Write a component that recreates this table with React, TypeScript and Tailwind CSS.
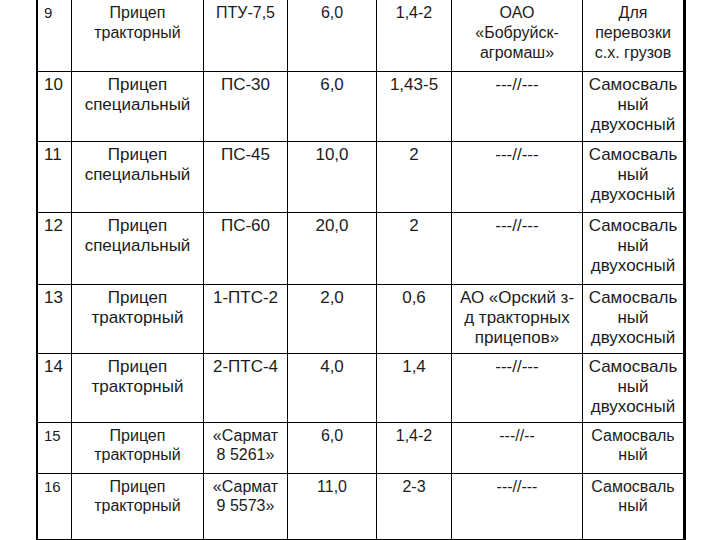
const rows = [
  {
    h: 'h-[72px]',
    size: 'text-[16px] leading-[20px]',
    numSize: 'text-[15px]',
    cells: ['9', ['Прицеп', 'тракторный'], ['ПТУ-7,5'], ['6,0'], ['1,4-2'], ['ОАО', '«Бобруйск-', 'агромаш»'], ['Для', 'перевозки', 'с.х. грузов']],
  },
  {
    h: 'h-[70px]',
    size: 'text-[17px] leading-[20px]',
    numSize: 'text-[17px]',
    cells: ['10', ['Прицеп', 'специальный'], ['ПС-30'], ['6,0'], ['1,43-5'], ['---//---'], ['Самосваль', 'ный', 'двухосный']],
  },
  {
    h: 'h-[71px]',
    size: 'text-[17px] leading-[20px]',
    numSize: 'text-[17px]',
    cells: ['11', ['Прицеп', 'специальный'], ['ПС-45'], ['10,0'], ['2'], ['---//---'], ['Самосваль', 'ный', 'двухосный']],
  },
  {
    h: 'h-[72px]',
    size: 'text-[17px] leading-[20px]',
    numSize: 'text-[17px]',
    cells: ['12', ['Прицеп', 'специальный'], ['ПС-60'], ['20,0'], ['2'], ['---//---'], ['Самосваль', 'ный', 'двухосный']],
  },
  {
    h: 'h-[69px]',
    size: 'text-[17px] leading-[20px]',
    numSize: 'text-[17px]',
    cells: ['13', ['Прицеп', 'тракторный'], ['1-ПТС-2'], ['2,0'], ['0,6'], ['АО «Орский з-', 'д тракторных', 'прицепов»'], ['Самосваль', 'ный', 'двухосный']],
  },
  {
    h: 'h-[69px]',
    size: 'text-[17px] leading-[20px]',
    numSize: 'text-[17px]',
    cells: ['14', ['Прицеп', 'тракторный'], ['2-ПТС-4'], ['4,0'], ['1,4'], ['---//---'], ['Самосваль', 'ный', 'двухосный']],
  },
  {
    h: 'h-[51px]',
    size: 'text-[16px] leading-[19px]',
    numSize: 'text-[15px]',
    cells: ['15', ['Прицеп', 'тракторный'], ['«Сармат', '8 5261»'], ['6,0'], ['1,4-2'], ['---//--'], ['Самосваль', 'ный']],
  },
  {
    h: 'h-[65px]',
    size: 'text-[16px] leading-[19px]',
    numSize: 'text-[15px]',
    cells: ['16', ['Прицеп', 'тракторный'], ['«Сармат', '9 5573»'], ['11,0'], ['2-3'], ['---//---'], ['Самосваль', 'ный']],
  },
];

const App = () => {
  return (
    <div className="w-[720px] h-[540px] overflow-hidden bg-white text-[#1c1c1c]" style={{ fontFamily: '"Liberation Sans", Arial, sans-serif' }}>
      <div className="ml-[36px] w-[650px] border-l-2 border-r-[3px] border-b-[3px] border-black">
        {rows.map((row, r) => (
          <div key={r} className={`grid grid-cols-[34px_132px_84px_89px_75px_131px_100px] ${row.h} ${row.size}`}>
            {row.cells.map((cell, c) => {
              const last = c === row.cells.length - 1;
              const bottom = r < rows.length - 1 ? 'border-b border-black' : '';
              const right = !last ? 'border-r border-black' : '';
              if (c === 0) {
                return (
                  <div key={c} className={`pl-[6px] pt-[3px] ${row.numSize} ${bottom} ${right}`}>
                    {cell as string}
                  </div>
                );
              }
              return (
                <div key={c} className={`pt-[3px] text-center ${bottom} ${right}`}>
                  {(cell as string[]).map((line, i) => (
                    <div key={i} className="whitespace-nowrap">{line}</div>
                  ))}
                </div>
              );
            })}
          </div>
        ))}
      </div>
    </div>
  );
};

export default App;
